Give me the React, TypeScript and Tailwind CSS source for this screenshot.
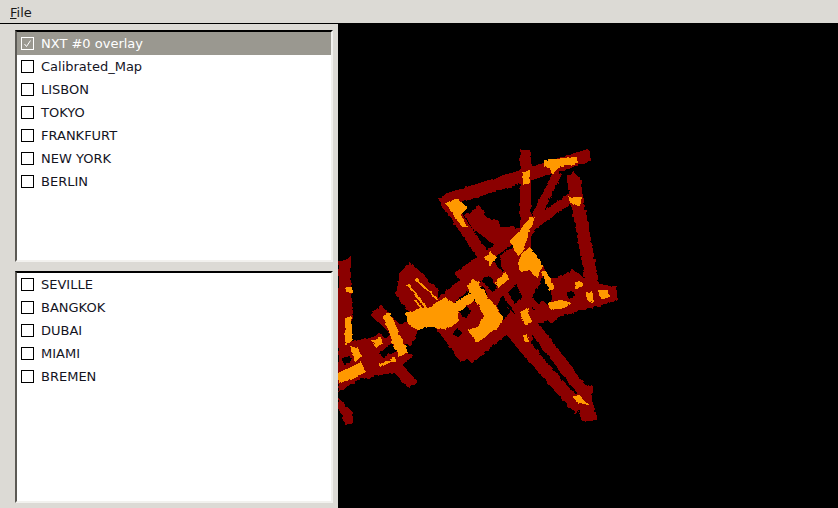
const topItems = ["NXT #0 overlay", "Calibrated_Map", "LISBON", "TOKYO", "FRANKFURT", "NEW YORK", "BERLIN"];
const bottomItems = ["SEVILLE", "BANGKOK", "DUBAI", "MIAMI", "BREMEN"];

// page coordinates: x1 y1 x2 y2 width
const redLines = [
  [447, 200, 590, 155, 13],
  [443, 196, 530, 325, 12],
  [525, 150, 527, 345, 11],
  [558, 172, 478, 335, 9],
  [574, 196, 457, 277, 10],
  [573, 178, 594, 292, 13],
  [616, 293, 470, 335, 15],
  [508, 327, 580, 410, 13],
  [532, 325, 584, 392, 12],
  [338, 385, 490, 265, 14],
  [393, 363, 413, 385, 11],
  [441, 322, 467, 358, 15],
  [467, 358, 505, 326, 15],
  [478, 284, 528, 335, 10],
  [505, 272, 555, 320, 11],
];

const redShapes = [
  "338,263 351,257 352,345 338,345",
  "338,343 371,338 381,333 391,350 414,355 395,372 358,380 338,392",
  "338,397 353,413 353,423 346,425 338,408",
  "370,315 380,305 398,323 410,322 420,325 412,345 398,345 385,328",
  "400,272 410,262 438,290 438,307 410,313 396,295",
  "465,215 480,206 487,218 499,220 500,228 514,226 518,238 498,250 488,240 472,228",
  "448,320 470,296 498,325 470,352",
  "567,175 573,172 582,180 580,195 570,197",
  "550,280 573,270 593,283 617,287 617,300 590,303 553,310",
  "583,387 593,385 592,400 598,420 582,422 578,407 572,398",
  "500,255 525,240 545,270 535,295 505,285",
];

const holes = [
  "460,312 467,306 471,312 465,319",
  "452,333 458,328 462,334 457,338",
  "476,292 482,286 488,294 482,300",
  "392,343 380,353 384,358 396,350",
  "566,293 572,291 574,296 568,298",
  "342,358 350,356 352,362 344,364",
  "508,292 516,284 522,296 514,304",
  "496,306 502,298 510,312 504,320",
  "536,288 546,296 540,304 532,298",
];

const stripes = [
  [416, 279, 438, 300, 2],
  [408, 285, 428, 310, 2],
  [415, 300, 423, 310, 2],
];

const orangeShapes = [
  "345,318 351,316 353,340 345,345",
  "346,288 352,287 352,293 346,292",
  "383,315 390,312 408,353 398,357",
  "371,340 381,337 383,343 376,348",
  "351,347 358,347 361,357 355,362",
  "345,370 361,362 366,372 351,380 338,383 338,373",
  "378,365 395,357 396,360 380,367",
  "406,313 420,308 438,305 438,325 418,330 408,325",
  "432,305 445,298 458,304 458,322 445,330 435,328",
  "450,305 472,292 475,300 455,316",
  "467,286 474,277 503,318 498,328 477,343 468,330 478,327 484,316",
  "485,258 490,252 496,258 491,266",
  "495,282 507,270 508,280 498,288",
  "522,253 530,247 540,260 542,267 537,278 530,270 520,272 518,263",
  "510,240 518,233 530,217 535,217 522,253 518,256",
  "520,312 527,308 532,322 525,325",
  "523,335 527,335 529,343 525,342",
  "548,303 560,300 570,302 566,308 550,310",
  "541,272 546,270 555,288 549,291",
  "445,203 458,198 467,208 460,215 468,227 462,227",
  "543,160 577,157 578,163 558,168 552,175 550,168 543,167",
  "522,172 530,170 530,183 523,185",
  "568,197 582,197 580,205 573,205",
  "575,282 582,282 582,288 575,288",
  "585,292 592,291 593,303 588,302",
  "598,290 608,290 610,297 600,298",
  "572,398 578,395 588,405 577,402",
];

function CheckRow({ label, active, checked }: { label: string; active?: boolean; checked?: boolean }) {
  return (
    <div className={`flex h-[23px] items-center pl-[4px] ${active ? "bg-[#9a9890] text-white" : "text-[#14141f]"}`}>
      <div className={`flex h-[13px] w-[13px] items-center justify-center border ${active ? "border-white" : "border-black bg-white"}`}>
        {checked && (
          <svg width="9" height="9" viewBox="0 0 9 9" fill="none" stroke="white" strokeWidth="1">
            <path d="M1.5 5 L3.5 7.5 L7.5 1.5" />
          </svg>
        )}
      </div>
      <span className="ml-[7px] text-[13px] leading-none">{label}</span>
    </div>
  );
}

function ListBox({ children, className }: { children: React.ReactNode; className: string }) {
  return (
    <div className={`box-border w-[318px] border-2 border-t-black border-l-[#5c5a55] border-r-[#f2f1ee] border-b-[#f2f1ee] bg-white ${className}`}>
      {children}
    </div>
  );
}

export default function App() {
  return (
    <div className="flex h-[508px] w-[838px] flex-col overflow-hidden bg-[#dcdad5] font-['DejaVu_Sans',sans-serif]">
      <div className="flex h-[24px] shrink-0 items-center border-b border-b-black pt-[2px] pl-[10px] text-[13px] text-[#1a1a1a]">
        <span><span className="underline">F</span>ile</span>
      </div>
      <div className="flex min-h-0 flex-1">
        <div className="flex w-[338px] shrink-0 flex-col pt-[6px] pl-[15px]">
          <ListBox className="h-[232px]">
            {topItems.map((item, i) => (
              <CheckRow key={item} label={item} active={i === 0} checked={i === 0} />
            ))}
          </ListBox>
          <ListBox className="mt-[9px] h-[232px]">
            {bottomItems.map((item) => (
              <CheckRow key={item} label={item} />
            ))}
          </ListBox>
        </div>
        <div className="min-w-0 flex-1 bg-black">
          <svg width="500" height="484" viewBox="338 24 500 484" shapeRendering="crispEdges">
            <defs>
              <filter id="rough" x="-5%" y="-5%" width="110%" height="110%" colorInterpolationFilters="sRGB">
                <feTurbulence type="fractalNoise" baseFrequency="0.22" numOctaves="1" seed="3" />
                <feDisplacementMap in="SourceGraphic" scale="4" xChannelSelector="R" yChannelSelector="G" />
              </filter>
            </defs>
            <g filter="url(#rough)">
              {redLines.map(([x1, y1, x2, y2, w], i) => (
                <line key={i} x1={x1} y1={y1} x2={x2} y2={y2} stroke="#8b0000" strokeWidth={w} />
              ))}
              {redShapes.map((p, i) => (
                <polygon key={i} points={p} fill="#8b0000" />
              ))}
              {holes.map((p, i) => (
                <polygon key={i} points={p} fill="#000000" />
              ))}
              {stripes.map(([x1, y1, x2, y2, w], i) => (
                <line key={i} x1={x1} y1={y1} x2={x2} y2={y2} stroke="#ff9900" strokeWidth={w} />
              ))}
              {orangeShapes.map((p, i) => (
                <polygon key={i} points={p} fill="#ff9900" />
              ))}
            </g>
          </svg>
        </div>
      </div>
    </div>
  );
}
